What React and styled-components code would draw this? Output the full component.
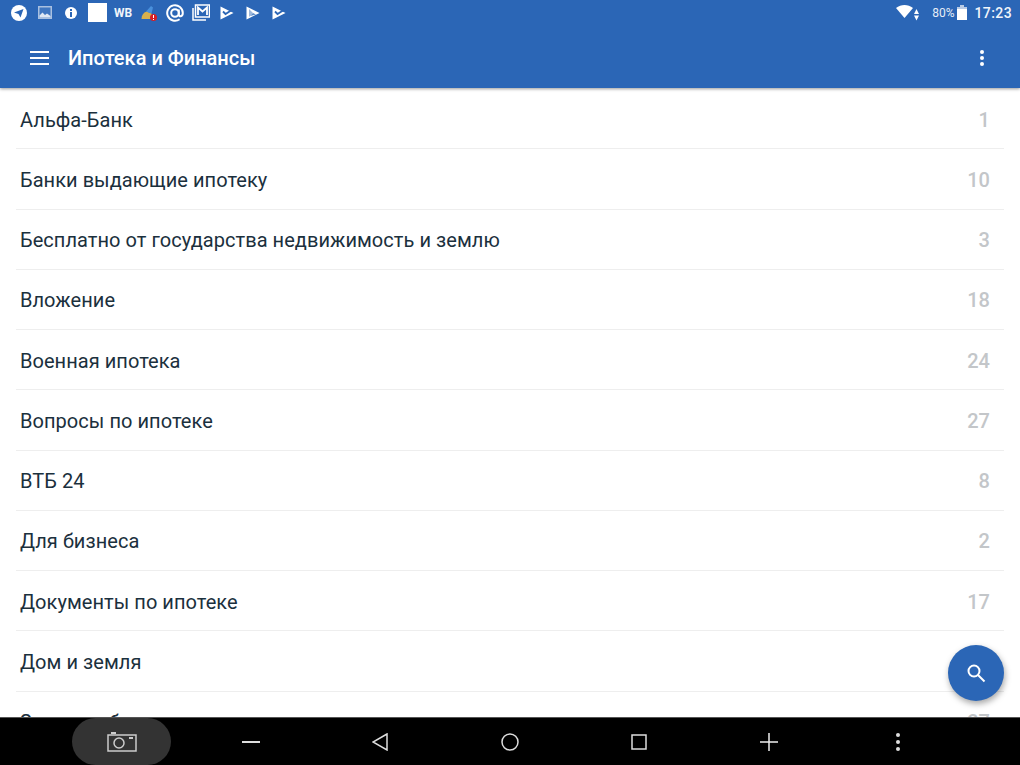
import React from "react";
import styled, { createGlobalStyle } from "styled-components";

const GlobalStyle = createGlobalStyle`
  html, body {
    margin: 0;
    padding: 0;
    background: #fff;
    font-family: Roboto, "Noto Sans", sans-serif;
  }
`;

const Screen = styled.div`
  position: relative;
  width: 1020px;
  height: 765px;
  display: flex;
  flex-direction: column;
  overflow: hidden;
  background: #fff;
`;

const Header = styled.header`
  height: 88px;
  flex: none;
  background: #2b66b6;
  box-shadow: 0 1px 3px rgba(0, 0, 0, 0.4);
  position: relative;
  z-index: 2;
`;

const StatusBar = styled.div`
  height: 25px;
  display: flex;
  align-items: center;
  padding: 0 8px 0 6px;
  color: #fff;
`;

const StatusIcons = styled.div`
  display: flex;
  align-items: center;
  flex: 1;
`;

// notification icons sit on an even 26px pitch
const IconSlot = styled.div`
  width: 26px;
  height: 20px;
  display: flex;
  align-items: center;
  justify-content: center;
  flex: none;
`;

const WhiteBox = styled.div`
  width: 19px;
  height: 19px;
  background: #fff;
`;

const WbLabel = styled.span`
  font-size: 12px;
  font-weight: 700;
  color: #f0f4fa;
`;

const StatusRight = styled.div`
  display: flex;
  align-items: center;
`;

const Percent = styled.span`
  font-size: 12px;
  color: #e6edf6;
  margin-left: 11px;
`;

const Battery = styled.svg`
  margin-left: 3px;
`;

const Clock = styled.span`
  font-size: 14px;
  font-weight: 500;
  letter-spacing: 0.4px;
  color: #f2f5fa;
  margin-left: 7px;
`;

const AppBar = styled.div`
  height: 63px;
  box-sizing: border-box;
  padding: 2px 36px 0 30px;
  display: flex;
  align-items: center;
  color: #fff;
`;

const Title = styled.h1`
  flex: 1;
  margin: 0 0 0 19px;
  font-size: 20px;
  font-weight: 500;
  color: #fff;
`;

const List = styled.div`
  flex: 1;
  padding: 1px 16px 0;
  overflow: hidden;
`;

const Row = styled.div`
  height: 60.25px;
  box-sizing: border-box;
  display: flex;
  align-items: center;
  justify-content: space-between;
  padding: 2px 14px 0 4px;
  border-bottom: 1px solid #eeeeee;
  font-size: 20px;
  letter-spacing: 0.05px;
`;

const RowName = styled.span`
  color: #1b303d;
`;

const RowCount = styled.span`
  color: #c3c6c9;
  font-weight: 500;
`;

const Fab = styled.button`
  position: absolute;
  left: 948px;
  top: 645px;
  width: 56px;
  height: 56px;
  padding: 0;
  border: none;
  border-radius: 50%;
  background: #2b66b6;
  display: flex;
  align-items: center;
  justify-content: center;
  box-shadow: 1px 3px 6px rgba(0, 0, 0, 0.35);
`;

const NavBar = styled.nav`
  height: 48px;
  flex: none;
  background: #000;
  border-top: 1px solid #555;
  box-sizing: border-box;
  position: relative;
  display: grid;
  grid-template-columns: 186px repeat(6, 129.5px);
  align-items: center;
`;

const ShotButton = styled.div`
  height: 47px;
  margin: 0 15px 0 72px;
  background: #333;
  border-radius: 24px;
  display: flex;
  align-items: center;
  justify-content: center;
`;

const NavIcon = styled.div`
  display: flex;
  justify-content: center;
  align-items: center;
`;

const rows = [
  ["Альфа-Банк", 1],
  ["Банки выдающие ипотеку", 10],
  ["Бесплатно от государства недвижимость и землю", 3],
  ["Вложение", 18],
  ["Военная ипотека", 24],
  ["Вопросы по ипотеке", 27],
  ["ВТБ 24", 8],
  ["Для бизнеса", 2],
  ["Документы по ипотеке", 17],
  ["Дом и земля", ""],
  ["Заявка в банк", 27],
];

const FlagIcon = () => (
  <svg width="14" height="14" viewBox="0 0 14 14">
    <path d="M0.500 0.500L13.500 7 0.500 13.500z" fill="#fff" />
    <path d="M3 5.500l2.500 2.500L11 4.500" fill="none" stroke="#2b66b6" strokeWidth="1.800" />
  </svg>
);

const App = () => {
  return (
    <Screen>
      <GlobalStyle />
      <Header>
        <StatusBar>
          <StatusIcons>
            <IconSlot>
              <svg width="16" height="16" viewBox="0 0 16 16">
                <circle cx="8" cy="8" r="8" fill="#fff" />
                <path d="M3 7.500L12.500 4 9.500 12.500 7.500 9z" fill="#2b66b6" />
              </svg>
            </IconSlot>
            <IconSlot>
              <svg width="14" height="13" viewBox="0 0 14 13">
                <rect width="14" height="13" fill="#a9c0e0" />
                <rect x="1.500" y="1.500" width="11" height="10" fill="#3f76c0" />
                <path d="M1.500 11.500v-2l3-3 2.500 2.500 2-1.500 3.500 2.500v1.500z" fill="#dfe8f4" />
              </svg>
            </IconSlot>
            <IconSlot>
              <svg width="12" height="12" viewBox="0 0 12 12">
                <circle cx="6" cy="6" r="6" fill="#fff" />
                <rect x="5" y="5" width="2" height="5" fill="#2b66b6" />
                <rect x="5" y="2" width="2" height="2" fill="#2b66b6" />
              </svg>
            </IconSlot>
            <IconSlot>
              <WhiteBox />
            </IconSlot>
            <IconSlot>
              <WbLabel>WB</WbLabel>
            </IconSlot>
            <IconSlot>
              <svg width="16" height="16" viewBox="0 0 16 16">
                <path d="M0.500 14c0-4 2-6.500 5-7.500l5 2c.5 2 .5 4 .5 5.500z" fill="#d9b04c" />
                <path d="M5 6.500L10 1l2 1.500-1.500 6z" fill="#4a90dc" />
                <circle cx="12.500" cy="12.500" r="3.500" fill="#d81f26" />
                <rect x="12" y="10" width="1" height="3" fill="#fff" />
                <rect x="12" y="14" width="1" height="1" fill="#fff" />
              </svg>
            </IconSlot>
            <IconSlot>
              <svg width="18" height="18" viewBox="0 0 18 18" fill="none" stroke="#fff" strokeWidth="2">
                <circle cx="9" cy="9" r="3.800" />
                <path d="M12.800 5.500v5c0 2.500 4 2.500 4-1.500a7.800 7.800 0 1 0-3.200 6.300" />
              </svg>
            </IconSlot>
            <IconSlot>
              <svg width="18" height="17" viewBox="0 0 18 17" fill="none" stroke="#fff">
                <path d="M1 4v12h13" strokeWidth="1.500" />
                <rect x="3.500" y="1" width="14" height="12" strokeWidth="1.500" />
                <path d="M6 11V3.500l4.500 4 4.500-4V11" strokeWidth="1.800" />
              </svg>
            </IconSlot>
            <IconSlot>
              <FlagIcon />
            </IconSlot>
            <IconSlot>
              <svg width="14" height="14" viewBox="0 0 14 14">
                <path d="M0.500 0.500L13.500 7 0.500 13.500z" fill="#fff" />
                <path d="M3 3v8l4-4z" fill="#9db8dc" />
                <path d="M7 7l-3 3 6-1.500z" fill="#5d8bc8" />
              </svg>
            </IconSlot>
            <IconSlot>
              <FlagIcon />
            </IconSlot>
          </StatusIcons>
          <StatusRight>
            <svg width="25" height="17" viewBox="0 0 25 17">
              <path d="M0 4C5 0 12 0 17 4L8.500 14z" fill="#fff" />
              <path d="M20.500 5l2.500 5h-5zM20.500 16.500l2.500-5h-5z" fill="#fff" />
            </svg>
            <Percent>80%</Percent>
            <Battery width="10" height="15" viewBox="0 0 10 15">
              <rect x="3" y="0" width="4" height="2" fill="#b9cbe5" />
              <rect x="0" y="2" width="10" height="2" fill="#b9cbe5" />
              <rect x="0" y="4" width="10" height="11" fill="#fff" />
            </Battery>
            <Clock>17:23</Clock>
          </StatusRight>
        </StatusBar>
        <AppBar>
          <svg width="19" height="14" viewBox="0 0 19 14">
            <path d="M0 1h19M0 7h19M0 13h19" stroke="#fff" strokeWidth="2" />
          </svg>
          <Title>Ипотека и Финансы</Title>
          <svg width="4" height="16" viewBox="0 0 4 16">
            <circle cx="2" cy="2" r="2" fill="#fff" />
            <circle cx="2" cy="8" r="2" fill="#fff" />
            <circle cx="2" cy="14" r="2" fill="#fff" />
          </svg>
        </AppBar>
      </Header>
      <List>
        {rows.map((r) => (
          <Row key={r[0]}>
            <RowName>{r[0]}</RowName>
            <RowCount>{r[1]}</RowCount>
          </Row>
        ))}
      </List>
      <Fab>
        <svg width="20" height="20" viewBox="0 0 20 20" fill="none" stroke="#fff" strokeWidth="2">
          <circle cx="8" cy="8" r="5.500" />
          <path d="M12 12l6.500 6.500" />
        </svg>
      </Fab>
      <NavBar>
        <ShotButton>
          <svg width="30" height="20" viewBox="0 0 30 20" fill="none" stroke="#ccc" strokeWidth="1.500">
            <path d="M1 3h28v16H1z" />
            <circle cx="12" cy="11" r="5" />
            <path d="M4 1h5M22 6h4" strokeWidth="2" />
          </svg>
        </ShotButton>
        <NavIcon>
          <svg width="18" height="2" viewBox="0 0 18 2">
            <rect width="18" height="2" fill="#ddd" />
          </svg>
        </NavIcon>
        <NavIcon>
          <svg width="16" height="18" viewBox="0 0 16 18" fill="none" stroke="#ddd" strokeWidth="1.500">
            <path d="M15 1L1 9l14 8z" />
          </svg>
        </NavIcon>
        <NavIcon>
          <svg width="18" height="18" viewBox="0 0 18 18" fill="none" stroke="#ddd" strokeWidth="1.500">
            <circle cx="9" cy="9" r="8" />
          </svg>
        </NavIcon>
        <NavIcon>
          <svg width="16" height="16" viewBox="0 0 16 16" fill="none" stroke="#ddd" strokeWidth="1.500">
            <rect x="1" y="1" width="14" height="14" />
          </svg>
        </NavIcon>
        <NavIcon>
          <svg width="18" height="18" viewBox="0 0 18 18" stroke="#eee" strokeWidth="1.500">
            <path d="M0 9h18M9 0v18" />
          </svg>
        </NavIcon>
        <NavIcon>
          <svg width="4" height="18" viewBox="0 0 4 18" fill="#ddd">
            <circle cx="2" cy="2" r="2" />
            <circle cx="2" cy="9" r="2" />
            <circle cx="2" cy="16" r="2" />
          </svg>
        </NavIcon>
      </NavBar>
    </Screen>
  );
};

export default App;
